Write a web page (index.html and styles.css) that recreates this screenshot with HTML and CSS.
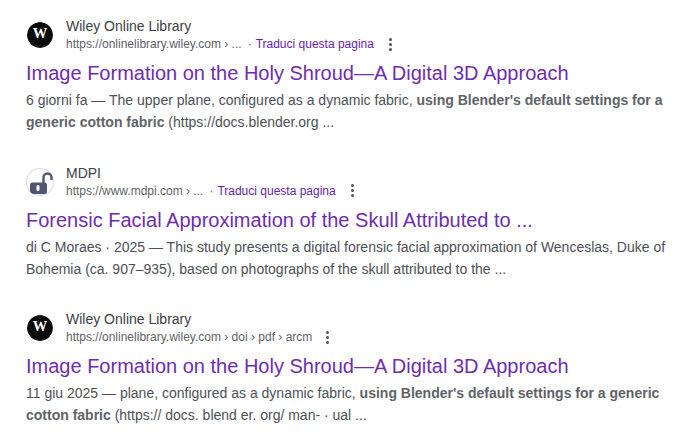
FILE: index.html
```html
<!DOCTYPE html>
<html lang="it">
<head>
    <meta charset="UTF-8">
    <title>Risultati</title>
    <link rel="stylesheet" href="styles.css">
</head>
<body>
    <div class="result">
        <div class="source">
            <div class="favicon">
                <svg viewBox="0 0 26 26" width="26" height="26"><circle cx="13" cy="13" r="13" fill="#0b0b0b"/><text x="13" y="16" text-anchor="middle" class="wiley">W</text></svg>
            </div>
            <div class="source-text">
                <div class="site">Wiley Online Library</div>
                <div class="url-row">
                    <span class="url">https://onlinelibrary.wiley.com › ...</span>
                    <span class="dot">·</span>
                    <span class="translate">Traduci questa pagina</span>
                    <span class="more"><i></i><i></i><i></i></span>
                </div>
            </div>
        </div>
        <a class="title">Image Formation on the Holy Shroud—A Digital 3D Approach</a>
        <p class="snippet">6 giorni fa — The upper plane, configured as a dynamic fabric, <b>using Blender's default settings for a generic cotton fabric</b> (https://docs.blender.org ...</p>
    </div>

    <div class="result">
        <div class="source">
            <div class="favicon outlined">
                <svg viewBox="0 0 28 28" width="28" height="28"><path d="M17.500 15V9.500a4 4 0 0 1 8 0V12" fill="none" stroke="#4f5671" stroke-width="2.400"/><rect x="4" y="14.500" width="17" height="11.500" rx="2.500" fill="#4f5671"/><rect x="10.500" y="17" width="3" height="6" rx="1.500" fill="#fff"/></svg>
            </div>
            <div class="source-text">
                <div class="site">MDPI</div>
                <div class="url-row">
                    <span class="url">https://www.mdpi.com › ...</span>
                    <span class="dot">·</span>
                    <span class="translate">Traduci questa pagina</span>
                    <span class="more"><i></i><i></i><i></i></span>
                </div>
            </div>
        </div>
        <a class="title">Forensic Facial Approximation of the Skull Attributed to ...</a>
        <p class="snippet">di C Moraes · 2025 — This study presents a digital forensic facial approximation of Wenceslas, Duke of Bohemia (ca. 907–935), based on photographs of the skull attributed to the ...</p>
    </div>

    <div class="result">
        <div class="source">
            <div class="favicon">
                <svg viewBox="0 0 26 26" width="26" height="26"><circle cx="13" cy="13" r="13" fill="#0b0b0b"/><text x="13" y="16" text-anchor="middle" class="wiley">W</text></svg>
            </div>
            <div class="source-text">
                <div class="site">Wiley Online Library</div>
                <div class="url-row">
                    <span class="url">https://onlinelibrary.wiley.com › doi › pdf › arcm</span>
                    <span class="more"><i></i><i></i><i></i></span>
                </div>
            </div>
        </div>
        <a class="title">Image Formation on the Holy Shroud—A Digital 3D Approach</a>
        <p class="snippet">11 giu 2025 — plane, configured as a dynamic fabric, <b>using Blender's default settings for a generic cotton fabric</b> (https:// docs. blend er. org/ man- · ual ...</p>
    </div>
</body>
</html>
```

FILE: styles.css
```css
* {
    margin: 0;
    padding: 0;
    box-sizing: border-box;
}

body {
    background: #fff;
    font-family: "Liberation Sans", Arial, sans-serif;
    padding: 17px 0 0 26px;
    width: 681px;
    height: 440px;
    overflow: hidden;
}

.result {
    width: 645px;
    margin-bottom: 30.5px;
}

.source {
    display: flex;
    align-items: center;
    height: 36px;
}

.favicon {
    width: 26px;
    height: 26px;
    border-radius: 50%;
    margin: 0 13px 0 1px;
    overflow: hidden;
}

.favicon.outlined {
    width: 28px;
    height: 28px;
    margin: 0 12px 0 0;
    box-shadow: inset 0 0 0 1px #dadce0;
}

.favicon svg {
    display: block;
}

.wiley {
    font-family: "Liberation Serif", serif;
    font-size: 14.5px;
    font-weight: bold;
    fill: #fff;
}

.site {
    font-size: 14px;
    line-height: 18px;
    color: #3c4043;
}

.url-row {
    display: flex;
    align-items: center;
    font-size: 12px;
    line-height: 18px;
    color: #5f6368;
}

.dot {
    margin: 0 4px 0 6px;
}

.translate {
    color: #681da8;
}

.more {
    display: flex;
    flex-direction: column;
    gap: 2px;
    margin-left: 15px;
}

.url + .more {
    margin-left: 14px;
}

.more i {
    width: 3px;
    height: 3px;
    border-radius: 50%;
    background: #4d5156;
}

.title {
    display: block;
    font-size: 20px;
    line-height: 26px;
    margin-top: 7px;
    color: #6f2dad;
}

.snippet {
    font-size: 14px;
    line-height: 22px;
    color: #4d5156;
    margin-top: 3px;
}

.snippet b {
    color: #5f6368;
}
```
